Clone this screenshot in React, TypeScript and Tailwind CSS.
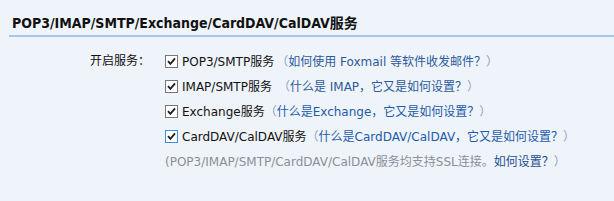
import React from 'react';

const font = "font-['DejaVu_Sans','Noto_Sans_CJK_SC',sans-serif]";

function Check({ focused }: { focused?: boolean }) {
  return (
    <span
      className={`inline-flex w-[13px] h-[13px] items-center justify-center border bg-white ${
        focused ? 'border-[#3d8ee6]' : 'border-[#777]'
      }`}
    >
      <svg width="9" height="9" viewBox="0 0 9 9">
        <path d="M1 4.2 L3.4 6.8 L8 1.4" fill="none" stroke="#222" strokeWidth="1.9" />
      </svg>
    </span>
  );
}

const rows = [
  { name: 'POP3/SMTP服务', gap: 'ml-[2px]', link: '如何使用 Foxmail 等软件收发邮件？', color: 'text-[#2c5a9a]' },
  { name: 'IMAP/SMTP服务', gap: 'ml-[6px]', link: '什么是 IMAP，它又是如何设置？', color: 'text-[#2c5a9a]' },
  { name: 'Exchange服务', gap: '', link: '什么是Exchange，它又是如何设置？', color: 'text-[#1d5bab]' },
  { name: 'CardDAV/CalDAV服务', gap: '', link: '什么是CardDAV/CalDAV，它又是如何设置？', color: 'text-[#1d5bab]', focused: true },
];

export default function App() {
  return (
    <div className={`w-[614px] h-[201px] bg-[#eff4fb] ${font} overflow-hidden`}>
      <div className="pt-[14px] ml-[9px] border-b-2 border-[#a8c6ea] pb-[3px] pl-[3px]">
        <h2 className="text-[14px] font-bold text-[#111] leading-[18px] font-['DejaVu_Sans_Condensed','DejaVu_Sans','Noto_Sans_CJK_SC',sans-serif]">
          POP3/IMAP/SMTP/Exchange/CardDAV/CalDAV服务
        </h2>
      </div>
      <div className="mt-[12px] flex text-[12px]">
        <div className="w-[150px] pl-[90px] leading-[25px] text-[#111]">开启服务：</div>
        <div className="pl-[15px] flex flex-col">
          {rows.map((r) => (
            <div key={r.name} className="flex items-center h-[25px] whitespace-nowrap">
              <Check focused={r.focused} />
              <span className="ml-[4px] text-[#111]">{r.name}</span>
              <span className={`${r.gap} text-[#8ea2c2]`}>（</span>
              <span className={r.color}>{r.link}</span>
              <span className="text-[#8ea2c2]">）</span>
            </div>
          ))}
          <div className="h-[25px] flex items-center whitespace-nowrap text-[#8a8f98]">
            <span>(POP3/IMAP/SMTP/CardDAV/CalDAV服务均支持SSL连接。</span>
            <span className="text-[#1f4f8f]">如何设置？</span>
            <span className="text-[#8ea2c2]">）</span>
          </div>
        </div>
      </div>
    </div>
  );
}
